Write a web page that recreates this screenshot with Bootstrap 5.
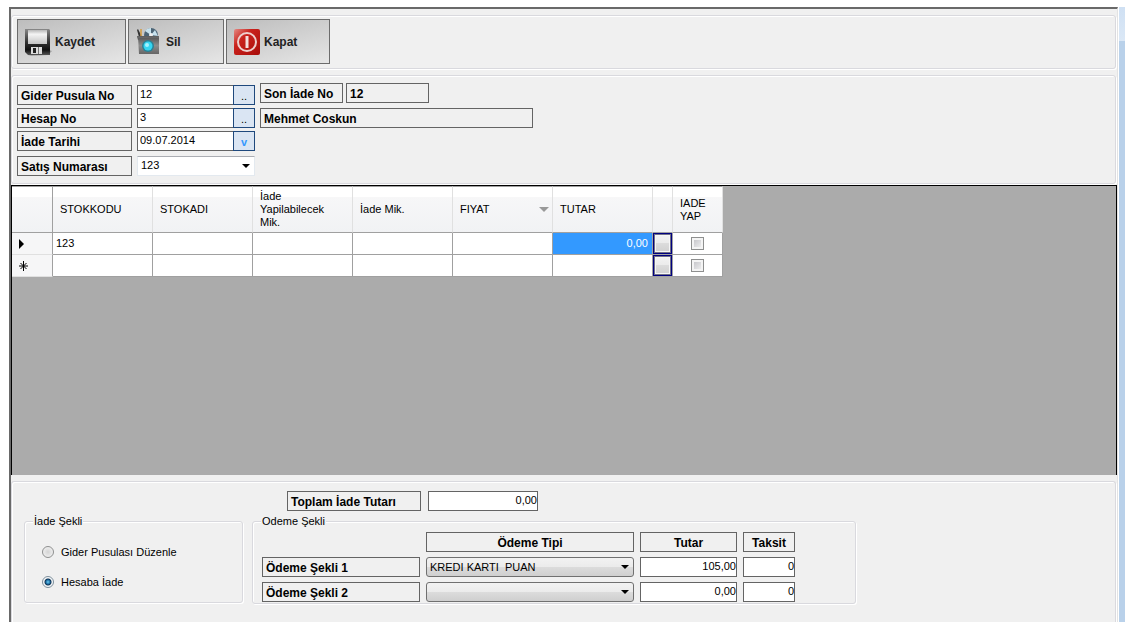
<!DOCTYPE html>
<html lang="tr">
<head>
<meta charset="utf-8">
<meta name="viewport" content="width=device-width, initial-scale=1">
<title>İade</title>
<link href="https://cdn.jsdelivr.net/npm/bootstrap@5.3.0/dist/css/bootstrap.min.css" rel="stylesheet">
<style>
  body { font: 11px/14px "Liberation Sans", Arial, sans-serif; color: #000; background: #fff; padding: 7px 9px; }
  .app-frame { min-height: calc(100vh - 14px); }
  .app-window { background: #f0f0f0; border-top: 2px solid #696969; border-left: 2px solid #696969; border-right: 1px solid #e3e3e3; min-width: 0; }
  .side-strip { width: 6px; margin-left: 1px; background: linear-gradient(#cfe0f3, #dbe8f6 34px, #b9d1ea 34px); }
  .panel, .group { border: 1px solid #d9d9de; border-radius: 3px; box-shadow: inset 1px 1px #fff, 1px 1px #fff; }
  .panel { margin-right: 1px; }
  .toolbar { margin-top: 6px; padding: 3px 5px 4px; gap: 2px; }
  .form-panel { margin-top: 6px; padding: 7px 5px 7px; }
  .tool-btn { display: flex; align-items: center; height: 45px; padding: 0 6px; border: 1px solid #6c6c6c; border-radius: 0; background: linear-gradient(165deg, #bdbdbd, #e6e6e6); font-size: 12px; font-weight: 700; color: #222; gap: 3px; }
  .tool-btn svg { width: 28px; height: 30px; flex: none; }
  .w-save { width: 109px; } .w-del { width: 96px; } .w-close { width: 104px; }
  .caption { display: block; height: 20px; border: 1px solid #646464; padding: 1px 3px 0; font-size: 12px; line-height: 19px; font-weight: 700; white-space: nowrap; }
  .field { display: block; width: 100%; height: 20px; min-width: 0; border: 1px solid #646464; border-radius: 0; background: #fff; padding: 0 2px 3px; font-size: 11px; line-height: 14px; color: #000; }
  .num { text-align: right; padding-right: 0; }
  .pick { flex: none; width: 22px; height: 20px; border: 1px solid #1f497d; background: #dae5f3; padding: 2px 0 0; line-height: 16px; margin-left: -1px; }
  .pick.date { color: #3399ff; font-weight: 700; }
  .rows { display: grid; grid-template-columns: 115px 118px; column-gap: 5px; row-gap: 3px; margin-top: 2px; }
  .last-row { margin-top: 2px; }
  .info-col { margin-left: 5px; }
  .info-top { gap: 3px; margin-bottom: 5px; }
  .w-info { width: 83px; } .w-name { width: 273px; }
  .drop { height: 20px; border: 1px solid #707070; border-radius: 3px; width: 100%; appearance: none; color: #000; padding: 0 16px 0 3px; font-size: 11px; line-height: 14px;
    background: url("data:image/svg+xml,%3Csvg xmlns='http://www.w3.org/2000/svg' width='8' height='4'%3E%3Cpath d='M0 0h8L4 4z'/%3E%3C/svg%3E") no-repeat right 4px center, linear-gradient(#f2f2f2, #ebebeb 50%, #dcdcdc 50%, #cfcfcf); }
  .drop.flat { border-color: #abadb3 #e3e9ef #e3e9ef; border-radius: 0; padding-bottom: 2px; background-image: url("data:image/svg+xml,%3Csvg xmlns='http://www.w3.org/2000/svg' width='8' height='4'%3E%3Cpath d='M0 0h8L4 4z'/%3E%3C/svg%3E"); background-color: #fff; }
  .grid-area { background: #ababab; border: 1px solid #000; border-bottom: 0; overflow: auto; min-height: 120px; margin-top: 1px; }
  .stock { table-layout: fixed; width: 711px; border-collapse: separate; border-spacing: 0; font-size: 11px; line-height: 13px; background: #fff; }
  .stock th, .stock td { border: solid #a0a0a0; border-width: 0 1px 1px 0; padding: 0 4px 0 3px; vertical-align: middle; }
  .stock thead th { height: 47px; font-weight: 400; padding: 0 7px; border-top: 1px solid #a0a0a0; border-right-color: #e0e0e0; background: linear-gradient(#fff, #fff 10px, #f7f7f8 10px, #f1f2f4); }
  .stock thead th.sorted { padding-right: 3px; }
  .stock thead th:first-child, .stock tbody th { border-right-color: #a0a0a0; }
  .stock tbody th { background: #f6f6f7; border-bottom-color: #e0e0e0; padding-left: 5px; }
  .stock tbody tr { height: 22px; }
  .stock svg { display: block; }
  .stock .chosen { background: #3399ff; color: #fff; text-align: right; }
  .stock .btn-cell { padding: 0; }
  .cell-btn { display: block; width: 19px; height: 21px; border: 1px solid #000080; background: linear-gradient(#f3f3f3, #ebebeb 50%, #dcdcdc 50%, #cfcfcf); box-shadow: inset 0 0 0 1px #707088, inset 0 0 0 2px #f6f6f6; padding: 0; }
  .tick { appearance: none; display: block; width: 13px; height: 13px; margin: 0 auto; border: 1px solid #8e8f8f; background: linear-gradient(135deg, #bdbdc2, #f6f6f6); box-shadow: inset 0 0 0 2px #f4f4f4; }
  .pay-panel { margin-top: 6px; padding: 9px 12px 18px; border-bottom: 0; border-radius: 3px 3px 0 0; }
  .pay-layout { display: grid; grid-template-columns: 219px 604px; column-gap: 9px; row-gap: 3px; align-items: start; }
  .total { grid-column: 2; display: grid; grid-template-columns: 134px 110px; gap: 7px; padding-left: 35px; }
  .group { padding: 0 8px 1px; min-width: 0; }
  .group legend { float: none; width: auto; margin: 0; padding: 0 1px; font-size: 11px; line-height: 14px; background: #f0f0f0; }
  .choices { padding: 17px 9px 12px; display: flex; flex-direction: column; gap: 16px; }
  .choice { display: flex; align-items: center; gap: 7px; height: 14px; }
  .choice input { appearance: none; width: 12px; height: 12px; margin: 0; border: 1px solid #8e8f8f; border-radius: 50%; background: radial-gradient(#d4d4d4, #f8f8f8); }
  .choice input:checked { border-color: #7d8f9c; background: radial-gradient(circle at 5px 5px, #6fd0f5 0, #1c6ea5 2px, #0f3353 3px, #f4f6f8 4px); }
  .pay-grid { display: grid; grid-template-columns: 159px 208px 97px 52px; column-gap: 6px; row-gap: 5px; padding-top: 4px; }
  .pay-grid label.caption { margin-left: 1px; }
</style>
</head>
<body>
<div class="app-frame d-flex">
  <main class="app-window flex-grow-1 d-flex flex-column">
    <div class="panel toolbar d-flex">
      <button type="button" class="tool-btn w-save">
        <svg viewBox="0 0 28 30"><defs><linearGradient id="gs" x2="0" y2="1"><stop stop-color="#b8b8b8"/><stop offset=".3" stop-color="#f4f4f4"/><stop offset="1" stop-color="#c4c4c4"/></linearGradient><linearGradient id="gb" x2="0" y2="1"><stop stop-color="#888"/><stop offset=".5" stop-color="#333"/><stop offset=".8" stop-color="#111"/><stop offset="1" stop-color="#555"/></linearGradient></defs><path d="M4 29l20-1 4-4-3-1z" fill="#888" opacity=".7"/><path d="M1 2h24l1 1v25H4l-3-3z" fill="url(#gb)"/><path d="M4 3h19v14H4z" fill="url(#gs)"/><path d="M7 20h11v7H7z" fill="#dcdcdc"/><path d="M9 21h3v5H9z" fill="#222"/><path d="M14 20h1v7h-1z" fill="#777"/></svg>
        Kaydet</button>
      <button type="button" class="tool-btn w-del">
        <svg viewBox="0 0 28 30"><defs><linearGradient id="gt" x2="0" y2="1"><stop stop-color="#555"/><stop offset=".5" stop-color="#8c8c8c"/><stop offset="1" stop-color="#666"/></linearGradient></defs><circle cx="16" cy="8" r="7" fill="#4c6475"/><path d="M16 8l-6-4a7 7 0 0 1 6-3zM16 8l7 1-3-6z" fill="#c6e1ed"/><circle cx="16" cy="8" r="2" fill="#eee"/><path d="M4 10L2 3l1-1 4 8z" fill="#333"/><path d="M6 10V2" stroke="#d39b3e" stroke-width="1.5"/><path d="M2 9h22l-1 4H3z" fill="#4a4a4a"/><path d="M3 10l1 17h20V10z" fill="url(#gt)"/><path d="M2 10h22" stroke="#777"/><circle cx="13" cy="19" r="6" fill="#2b8296"/><circle cx="13" cy="19" r="4.5" fill="#35d6f2"/><circle cx="12" cy="18" r="2" fill="#a4f3ff"/></svg>
        Sil</button>
      <button type="button" class="tool-btn w-close">
        <svg viewBox="0 0 28 30"><defs><linearGradient id="gr" x2="1" y2="1"><stop stop-color="#e58a84"/><stop offset=".35" stop-color="#c9211b"/><stop offset="1" stop-color="#a80d0a"/></linearGradient></defs><rect x="1" y="2" width="26" height="26" rx="2" fill="url(#gr)"/><circle cx="14" cy="15" r="9" fill="none" stroke="#eecfcd" stroke-width="2"/><path d="M14 9v12" stroke="#f4dedd" stroke-width="3"/></svg>
        Kapat</button>
    </div>

    <form class="panel form-panel d-flex align-items-start">
      <div class="rows">
        <label class="caption" for="gider">Gider Pusula No</label>
        <div class="d-flex"><input class="field" id="gider" value="12"><button type="button" class="pick" aria-label="Gider seç">..</button></div>
        <label class="caption" for="hesap">Hesap No</label>
        <div class="d-flex"><input class="field" id="hesap" value="3"><button type="button" class="pick" aria-label="Hesap seç">..</button></div>
        <label class="caption" for="tarih">İade Tarihi</label>
        <div class="d-flex"><input class="field" id="tarih" value="09.07.2014"><button type="button" class="pick date" aria-label="Tarih seç">v</button></div>
        <label class="caption last-row" for="satis">Satış Numarası</label>
        <select class="drop flat last-row" id="satis"><option>123</option></select>
      </div>
      <div class="info-col">
        <div class="d-flex info-top"><span class="caption w-info">Son İade No</span><output class="caption w-info">12</output></div>
        <output class="caption w-name">Mehmet Coskun</output>
      </div>
    </form>

    <div class="grid-area flex-grow-1">
      <table class="stock">
        <colgroup><col style="width:41px"><col span="6" style="width:100px"><col style="width:20px"><col style="width:50px"></colgroup>
        <thead>
          <tr><th></th><th>STOKKODU</th><th>STOKADI</th><th>İade Yapilabilecek Mik.</th><th>İade Mik.</th>
            <th class="sorted"><div class="d-flex justify-content-between align-items-center">FIYAT<svg width="10" height="5"><path d="M0 0h10L5 5z" fill="#999"/></svg></div></th>
            <th>TUTAR</th><th></th><th>IADE YAP</th></tr>
        </thead>
        <tbody>
          <tr><th><svg width="10" height="10"><path d="M2 0v10l5-5z"/></svg></th><td>123</td><td></td><td></td><td></td><td></td><td class="chosen">0,00</td><td class="btn-cell"><button type="button" class="cell-btn" aria-label="Seç"></button></td><td><input type="checkbox" class="tick" aria-label="İade yap"></td></tr>
          <tr><th><svg width="12" height="10" stroke="#000"><path d="M6.5 0v10M2 5h9M3.5 2l6 6M9.5 2l-6 6"/></svg></th><td></td><td></td><td></td><td></td><td></td><td></td><td class="btn-cell"><button type="button" class="cell-btn" aria-label="Seç"></button></td><td><input type="checkbox" class="tick" aria-label="İade yap"></td></tr>
        </tbody>
      </table>
    </div>

    <form class="panel pay-panel">
      <div class="pay-layout">
        <div class="total"><label class="caption" for="toplam">Toplam İade Tutarı</label><input class="field num" id="toplam" value="0,00"></div>
        <fieldset class="group">
          <legend>İade Şekli</legend>
          <div class="choices">
            <label class="choice"><input type="radio" name="iade">Gider Pusulası Düzenle</label>
            <label class="choice"><input type="radio" name="iade" checked>Hesaba İade</label>
          </div>
        </fieldset>
        <fieldset class="group">
          <legend>Odeme Şekli</legend>
          <div class="pay-grid">
            <span></span><span class="caption text-center">Ödeme Tipi</span><span class="caption text-center">Tutar</span><span class="caption text-center">Taksit</span>
            <label class="caption" for="o1">Ödeme Şekli 1</label>
            <select class="drop" id="o1"><option>KREDI KARTI&nbsp; PUAN</option></select>
            <input class="field num" value="105,00" aria-label="Tutar 1"><input class="field num" value="0" aria-label="Taksit 1">
            <label class="caption" for="o2">Ödeme Şekli 2</label>
            <select class="drop" id="o2"><option></option></select>
            <input class="field num" value="0,00" aria-label="Tutar 2"><input class="field num" value="0" aria-label="Taksit 2">
          </div>
        </fieldset>
      </div>
    </form>
  </main>
  <div class="side-strip"></div>
</div>
<script src="https://cdn.jsdelivr.net/npm/bootstrap@5.3.0/dist/js/bootstrap.bundle.min.js"></script>
</body>
</html>
